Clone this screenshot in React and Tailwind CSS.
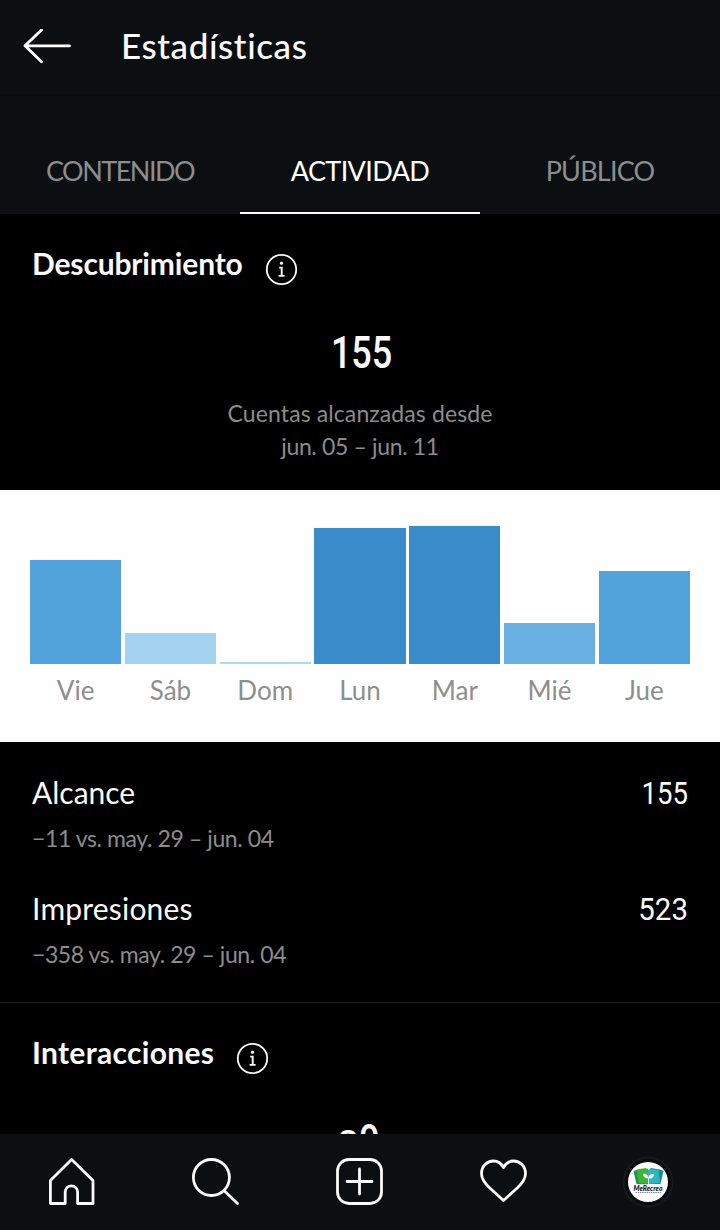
const tabs = [
  { label: 'CONTENIDO', active: false, tracking: 'tracking-[-1.5px]' },
  { label: 'ACTIVIDAD', active: true, tracking: 'tracking-[-0.6px]' },
  { label: 'PÚBLICO', active: false, tracking: 'tracking-[-0.8px]' },
];

const days = [
  { label: 'Vie', height: 104, color: 'bg-[#52a3dc]' },
  { label: 'Sáb', height: 31, color: 'bg-[#a4d3f2]' },
  { label: 'Dom', height: 2, color: 'bg-[#a8dcee]' },
  { label: 'Lun', height: 136.5, color: 'bg-[#398bca]' },
  { label: 'Mar', height: 138, color: 'bg-[#398bca]' },
  { label: 'Mié', height: 41.5, color: 'bg-[#6bb0e2]' },
  { label: 'Jue', height: 93.5, color: 'bg-[#52a3dc]' },
];

const InfoIcon = () => (
  <svg className="mt-[10px] h-[33px] w-[33px]" viewBox="0 0 33 33" fill="none" stroke="#fafafa">
    <circle cx="16.5" cy="16.5" r="14.7" strokeWidth="1.8" />
    <circle cx="16.5" cy="10.2" r="1.6" fill="#fafafa" stroke="none" />
    <path d="M14.2 14.6h2.5v8M13.6 22.9h6" strokeWidth="1.9" />
  </svg>
);

const SectionTitle = ({ children, className }) => (
  <div className="flex h-10 items-start gap-[22px] pl-8">
    <h2 className={`text-[30px] leading-10 font-bold whitespace-nowrap ${className}`}>{children}</h2>
    <InfoIcon />
  </div>
);

const BigNumber = ({ children, className }) => (
  <p className={`scale-x-[0.8] font-['Roboto','Lato',sans-serif] text-[45px] leading-[48px] ${className}`}>
    {children}
  </p>
);

const Metric = ({ name, value, change, nameClass, valueClass, changeClass }) => (
  <div className="px-8">
    <div className="flex justify-between text-[30px] leading-10">
      <span className={`whitespace-nowrap ${nameClass}`}>{name}</span>
      <span className={`mt-px -mb-px origin-right font-['Roboto','Lato',sans-serif] text-[32px] ${valueClass}`}>{value}</span>
    </div>
    <p className={`mt-[10px] text-[23px] leading-8 whitespace-nowrap text-[#8c8c8c] ${changeClass}`}>{change}</p>
  </div>
);

const Avatar = () => (
  <svg className="h-[52px] w-[52px]" viewBox="0 0 52 52">
    <circle cx="26" cy="26" r="24.5" fill="#0b0c0e" stroke="#17191c" strokeWidth="2" />
    <circle cx="26" cy="26" r="20" fill="#fff" />
    <path d="M11.5 15l4-1.2 10.5-1v15.5H14.5z" fill="#219548" />
    <path d="M15 13.5l9-1.5 3 3v12.5l-10.5-.5z" fill="#3db437" />
    <path d="M26 15l3-3 9 1.5 3.5 1.5L38.5 28H26z" fill="#138c96" />
    <path d="M26 15l3-2 7.5.8L38 27l-12 1z" fill="#2fb5be" />
    <path d="M26.5 28v-6M26 22c-3 0-4.5-1.5-4.5-4 3 0 4.5 1.5 4.5 4zM27 22c0-2.5 1.5-4 4.5-3.5 0 2.5-1.5 4-4.5 3.5z" fill="#fff" stroke="#fff" strokeWidth=".8" />
    <text x="26" y="34.5" textAnchor="middle" fontFamily="Lato, sans-serif" fontSize="7" fontWeight="900" fontStyle="italic" fill="#111" textLength="29" lengthAdjust="spacingAndGlyphs">MeRecreo</text>
    <path d="M13.5 36.5h26" stroke="#888" strokeWidth="1" strokeDasharray="1.5 .7" />
  </svg>
);

const BottomNav = () => (
  <nav className="grid h-24 shrink-0 grid-cols-5 place-items-center bg-[#0c0f12]">
    <svg className="h-12 w-12" viewBox="0 0 48 48" fill="none" stroke="#fafafa" strokeWidth="2.8" strokeLinejoin="round">
      <path d="M23.6 1.6L45 22.5V45.5H29.6V34a6.2 6.2 0 0 0-12.4 0V45.5H2.4V22.5z" />
    </svg>
    <svg className="h-12 w-12" viewBox="0 0 48 48" fill="none" stroke="#fafafa" strokeWidth="2.8" strokeLinecap="round">
      <circle cx="19.4" cy="19.5" r="18" />
      <path d="M32.5 33L45.5 45.5" />
    </svg>
    <svg className="h-12 w-12" viewBox="0 0 48 48" fill="none" stroke="#fafafa" strokeWidth="2.8" strokeLinecap="round">
      <rect x="1.5" y="1.5" width="44" height="44" rx="11.5" />
      <path d="M23.5 11v25M11 23.5h25" />
    </svg>
    <svg className="h-12 w-12" viewBox="0 0 48 48" fill="none" stroke="#fafafa" strokeWidth="2.8" strokeLinejoin="round">
      <path d="M23.5 9.5C21 5 17.5 3 13.5 3 7 3 1.5 8 1.5 15.5c0 6.500 4 10.500 8 14.200L23.500 42.500l14-12.800c4-3.700 8-7.700 8-14.200C45.500 8 40 3 33.500 3c-4 0-7.500 2-10 6.500z" />
    </svg>
    <Avatar />
  </nav>
);

export default function App() {
  return (
    <div className="flex h-[1230px] w-[720px] flex-col overflow-hidden bg-black font-['Lato','Open_Sans',sans-serif] text-[#fafafa]">
      <header className="flex h-[94px] shrink-0 items-center bg-[#0c0f12] pl-[23px]">
        <svg className="h-9 w-12" viewBox="0 0 48 36" fill="none" stroke="#fff" strokeWidth="2.8" strokeLinecap="round" strokeLinejoin="round">
          <path d="M18.5 0.9L2 16.8l16.5 15.9M2.5 16.8h44" />
        </svg>
        <h1 className="mb-[5px] ml-[50px] text-[35px] leading-10 font-medium tracking-[0.6px]">Estadísticas</h1>
      </header>

      <div className="grid h-[120px] shrink-0 grid-cols-3 border-t-2 border-[#090c0f] bg-[#0c0f12] pt-[34px]">
        {tabs.map((tab) => (
          <div
            key={tab.label}
            className={`flex items-center justify-center border-b-2 text-[27px] ${tab.tracking} ${
              tab.active ? 'border-white text-white' : 'border-transparent text-[#8b8d8f]'
            }`}
          >
            {tab.label}
          </div>
        ))}
      </div>

      <main className="min-h-0 flex-1 overflow-hidden">
        <section className="h-[276px] pt-[29px] text-center">
          <SectionTitle className="tracking-[-0.15px]">Descubrimiento</SectionTitle>
          <BigNumber className="mt-[46px] pl-1 font-medium">155</BigNumber>
          <p className="mt-5 text-[23px] leading-[33px] text-[#8c8c8c]">
            <span className="tracking-[0.1px]">Cuentas alcanzadas desde</span>
            <br />
            <span className="tracking-[-0.35px]">jun. 05 – jun. 11</span>
          </p>
        </section>

        <section className="h-[252px] bg-[#fefefe] px-[30px] pt-9">
          <div className="grid h-[138px] grid-cols-7 items-end gap-[3.5px]">
            {days.map((day) => (
              <div key={day.label} className={day.color} style={{ height: day.height }} />
            ))}
          </div>
          <div className="mt-2 grid grid-cols-7 gap-[3.5px] text-center text-[26px] leading-9 text-[#8e8e8e]">
            {days.map((day) => (
              <span key={day.label}>{day.label}</span>
            ))}
          </div>
        </section>

        <section className="flex h-[261px] flex-col gap-[34px] border-b border-[#1c1c1c] pt-[30px]">
          <Metric
            name="Alcance"
            value="155"
            change="−11 vs. may. 29 – jun. 04"
            nameClass="tracking-normal"
            valueClass="scale-x-[0.86]"
            changeClass="tracking-[-0.4px]"
          />
          <Metric
            name="Impresiones"
            value="523"
            change="−358 vs. may. 29 – jun. 04"
            nameClass="tracking-[0.2px]"
            valueClass="scale-x-[0.92]"
            changeClass="tracking-[-0.42px]"
          />
        </section>

        <section className="pt-[29px] text-center">
          <SectionTitle className="tracking-[0.3px]">Interacciones</SectionTitle>
          <BigNumber className="mt-[45px] font-medium">
            <span className="mr-[3px] inline-block scale-x-125 text-[36px]">2</span>9
          </BigNumber>
        </section>
      </main>

      <BottomNav />
    </div>
  );
}
